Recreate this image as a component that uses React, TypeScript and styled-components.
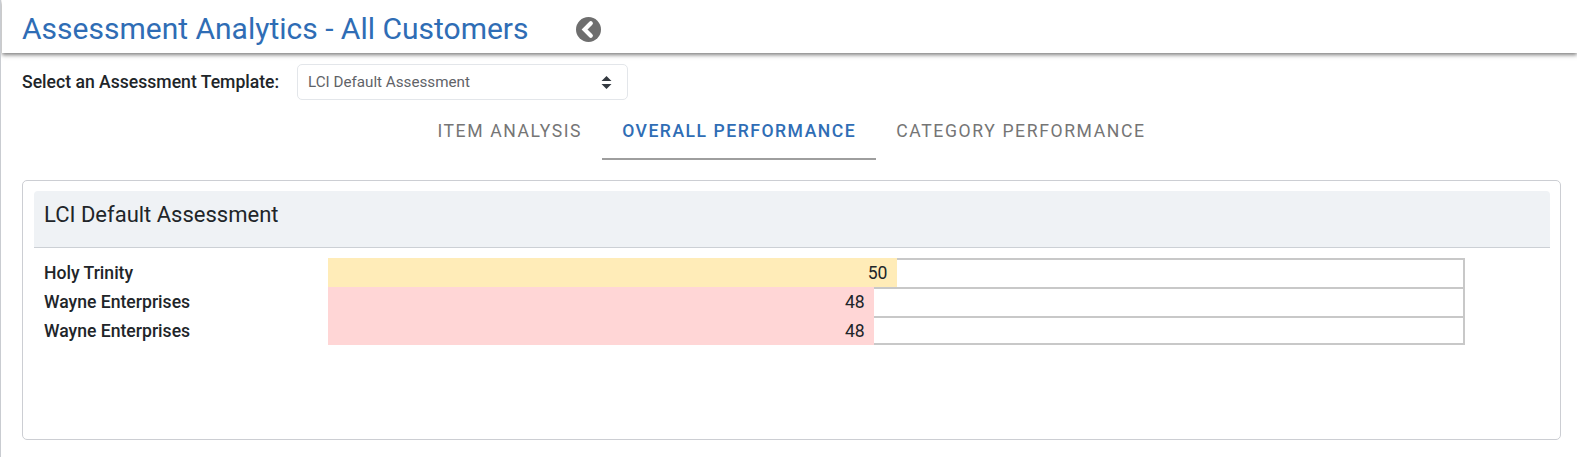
import React from "react";
import styled, { createGlobalStyle } from "styled-components";

const Global = createGlobalStyle`
  html, body { margin: 0; padding: 0; background: #fff; }
  body { font-family: Roboto, "Liberation Sans", sans-serif; color: #212529; }
  * { box-sizing: border-box; }
`;

const Page = styled.div`
  width: 1577px;
  height: 457px;
  overflow: hidden;
  border-left: 1px solid #c9ccd1;
  background: #fff;
`;

const Header = styled.header`
  height: 53px;
  margin-left: 1px;
  padding: 5px 0 0 20px;
  display: flex;
  align-items: center;
  background: #fff;
  box-shadow: 0 2px 4px 0 rgba(0, 0, 0, 0.5);
`;

const Title = styled.h1`
  margin: 0;
  font-size: 30px;
  font-weight: 400;
  line-height: 36px;
  color: #2f6db5;
`;

const BackIcon = styled.svg`
  width: 25px;
  height: 25px;
  margin-left: 47px;
  display: block;
`;

const SelectRow = styled.div`
  display: flex;
  align-items: center;
  margin-top: 11px;
  padding-left: 21px;
  height: 36px;
`;

const SelectLabel = styled.label`
  width: 275px;
  font-size: 17.6px;
  font-weight: 500;
  color: #212529;
`;

const SelectBox = styled.div`
  width: 331px;
  height: 36px;
  padding: 0 15px 0 10px;
  display: flex;
  align-items: center;
  justify-content: space-between;
  border: 1px solid #e3e6ea;
  border-radius: 5px;
  font-size: 15.2px;
  color: #5f6368;
`;

const Tabs = styled.nav`
  display: flex;
  justify-content: center;
  margin-top: 1px;
  height: 59px;
  padding-left: 5px;
`;

const Tab = styled.div<{ $active?: boolean }>`
  padding: 20px 20px 0;
  height: 59px;
  font-size: 17.6px;
  font-weight: ${(p) => (p.$active ? 500 : 400)};
  letter-spacing: ${(p) => (p.$active ? "1.5px" : "1.6px")};
  line-height: 20px;
  white-space: nowrap;
  color: ${(p) => (p.$active ? "#2f6db5" : "#757575")};
  border-bottom: 2px solid ${(p) => (p.$active ? "#9e9e9e" : "transparent")};
`;

const Card = styled.section`
  width: 1539px;
  height: 260px;
  margin: 20px 0 0 21px;
  padding: 10px 10px 0 11px;
  border: 1px solid #ccced3;
  border-radius: 5px;
`;

const CardHeader = styled.div`
  height: 57px;
  padding: 11px 10px 0;
  background: #eff2f5;
  border-bottom: 1px solid #ccd0d5;
  border-radius: 4px 4px 0 0;
  font-size: 22px;
  font-weight: 400;
  line-height: 26px;
  color: #212529;
`;

const Rows = styled.div`
  margin-top: 10px;
`;

const Row = styled.div`
  display: flex;
  height: 29px;
`;

const RowLabel = styled.div`
  width: 294px;
  padding: 4.6px 0 0 10px;
  font-size: 17.6px;
  font-weight: 500;
  line-height: 20px;
  color: #212529;
`;

const Track = styled.div`
  position: relative;
  width: 1137px;
  height: 29px;
  border: 2px solid #c8c8c8;
  border-bottom-width: 0;
`;

const RowWrap = styled(Row)`
  &:last-child ${Track} { border-bottom-width: 2px; }
`;

const Fill = styled.div<{ $tone: "warn" | "bad" }>`
  position: absolute;
  left: -2px;
  top: -2px;
  height: 29px;
  padding: 4.6px 9px 0 0;
  text-align: right;
  font-size: 17.6px;
  line-height: 20px;
  color: #212529;
  background: ${(p) => (p.$tone === "warn" ? "#ffecb8" : "#ffd6d6")};
`;

const data = [
  { name: "Holy Trinity", score: 50, tone: "warn" as const },
  { name: "Wayne Enterprises", score: 48, tone: "bad" as const },
  { name: "Wayne Enterprises", score: 48, tone: "bad" as const },
];

export default function App() {
  return (
    <Page>
      <Global />
      <Header>
        <Title>Assessment Analytics - All Customers</Title>
        <BackIcon viewBox="0 0 25 25" aria-hidden="true">
          <circle cx="12.5" cy="12.5" r="12.5" fill="#6e6e6e" />
          <path d="M14.8 6.3 L8.6 12.5 L14.8 18.7" fill="none" stroke="#fff" strokeWidth="4.2" strokeLinecap="round" strokeLinejoin="miter" />
        </BackIcon>
      </Header>
      <SelectRow>
        <SelectLabel>Select an Assessment Template:</SelectLabel>
        <SelectBox>
          LCI Default Assessment
          <svg width="11" height="15" viewBox="0 0 11 15" aria-hidden="true">
            <path d="M5.5 1 L10.5 6 H0.5 Z M5.5 14 L0.5 9 H10.5 Z" fill="#343a40" />
          </svg>
        </SelectBox>
      </SelectRow>
      <Tabs>
        <Tab>ITEM ANALYSIS</Tab>
        <Tab $active>OVERALL PERFORMANCE</Tab>
        <Tab>CATEGORY PERFORMANCE</Tab>
      </Tabs>
      <Card>
        <CardHeader>LCI Default Assessment</CardHeader>
        <Rows>
          {data.map((d, i) => (
            <RowWrap key={i}>
              <RowLabel>{d.name}</RowLabel>
              <Track>
                <Fill $tone={d.tone} style={{ width: `${(d.score * 1137) / 1133}%` }}>{d.score}</Fill>
              </Track>
            </RowWrap>
          ))}
        </Rows>
      </Card>
    </Page>
  );
}
